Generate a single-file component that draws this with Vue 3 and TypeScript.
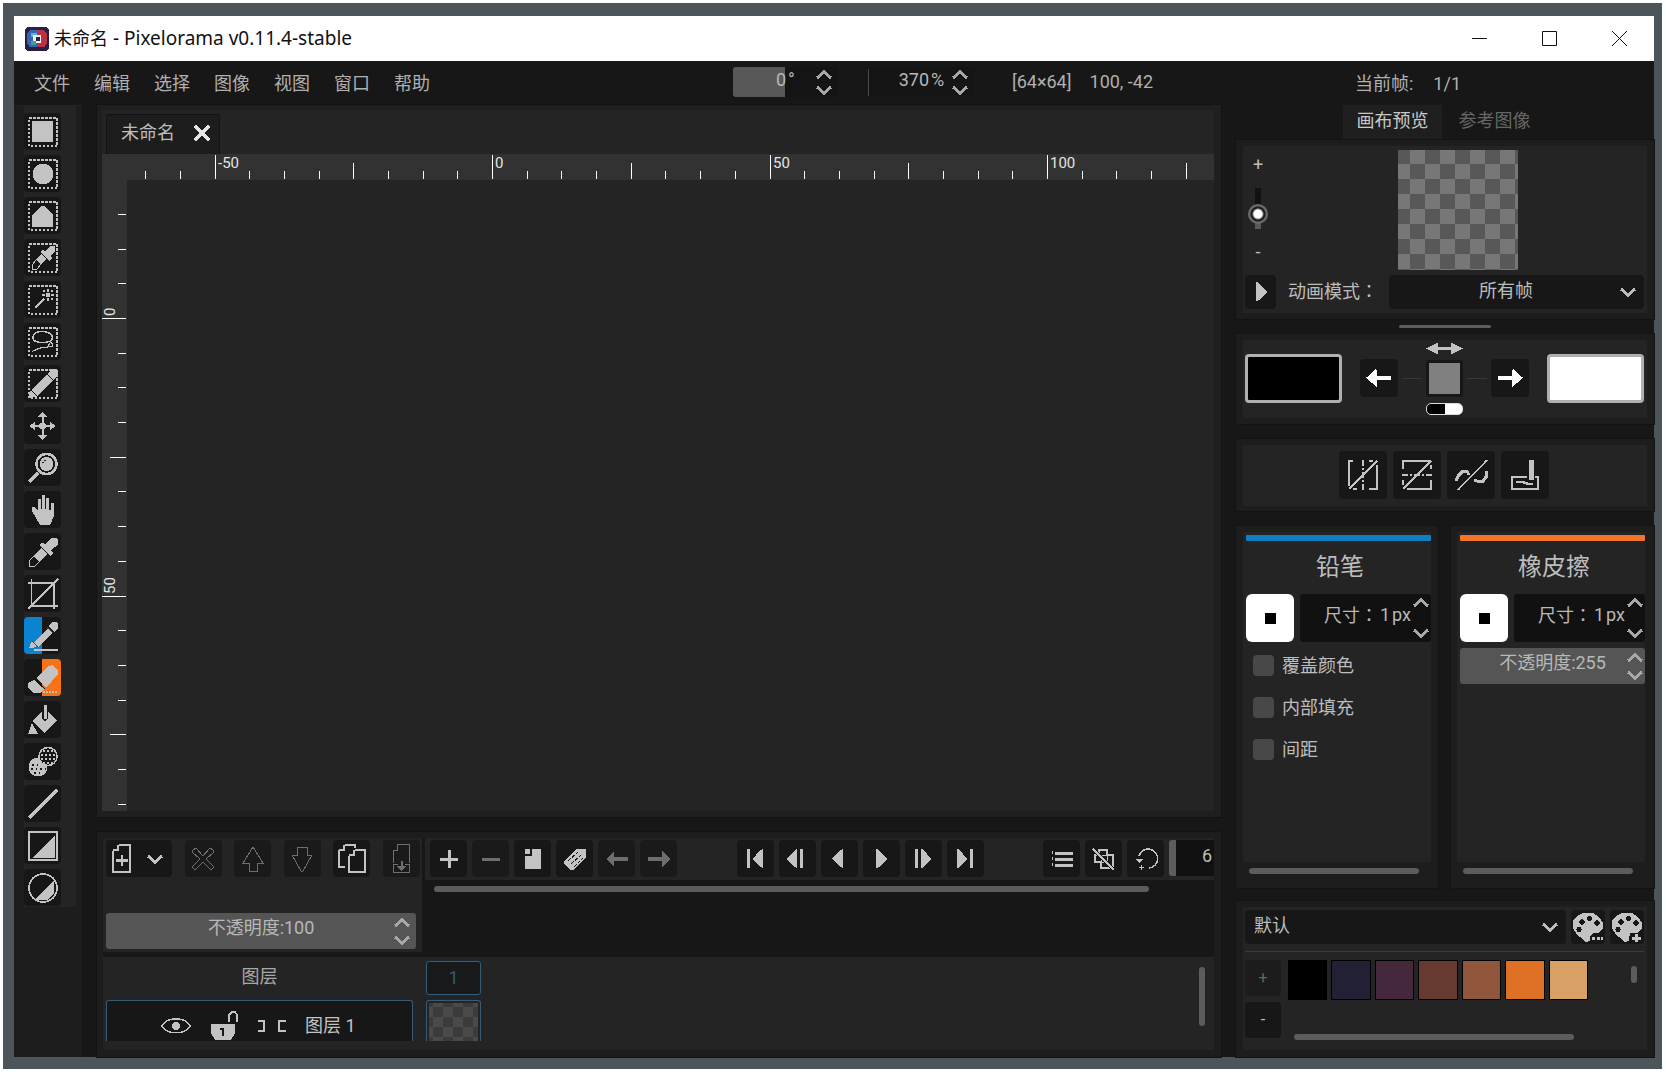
<script setup lang="ts">
import { computed, h, onMounted, onUnmounted, ref } from 'vue'

// A shape is a path plus how to paint it: 0 fills it, any other number is a stroke width.
type Shape = [d: string, stroke: number, colour?: string, dash?: string]

const disc = (x: number, y: number, r: number) => `M${x - r} ${y}a${r} ${r} 0 1 1 ${2 * r} 0a${r} ${r} 0 1 1 ${-2 * r} 0Z`
const marquee: Shape = ['M1 1H29V29H1Z', 2, 'currentColor', '2.5 1.5']

const icons: Record<string, Shape[]> = {
  rectSelect: [marquee, ['M4 4H25V25H4Z', 0]],
  ellipseSelect: [marquee, [disc(15, 15, 10.5), 0]],
  polySelect: [marquee, ['M14 5H16L25 14V26H4V14Z', 0]],
  colorSelect: [
    marquee,
    ['M17 8L22 3H27V8L22 13L24 15L21 18L12 9L15 7Z', 0],
    ['M13 11L18 16L13 21L8 17Z', 0],
    ['M8 17L4 22V26H9L13 21', 1],
  ],
  wand: [
    marquee,
    ['M7 23L16 14', 1.5],
    ['M18 8H22V12H18Z', 0],
    ['M19 4h2v3h-2zM19 13h2v3h-2zM14 9h3v2h-3zM23 9h3v2h-3zM15 5h2v2h-2zM23 5h2v2h-2zM23 13h2v2h-2z', 0],
  ],
  lasso: [
    marquee,
    ['M14 4.5C20 4.5 24.500 7 24.500 10.500S20 15.500 14 15.500S5 14 5 10.500S8 4.500 14 4.500Z', 1.5],
    ['M21 14L25 17L24 20L20 19L22 16M20 20L12 21L4 24.500', 1.2],
  ],
  paintSelect: [
    marquee,
    ['M1 29L2 22L20 4L26 10L8 28Z', 0],
    ['M20 4L24 0H28L30 2V6L26 10Z', 0],
    ['M18 4L26 12M3 21L9 27', 1, '#171717'],
  ],
  move: [
    [disc(14.5, 15, 3.5), 0],
    ['M14.5 3V27M3 15H27', 2],
    ['M14.5 1L19 6H10ZM14.5 29L19 24H10ZM1 15L7 11V19ZM28 15L22 11V19Z', 0],
  ],
  zoom: [
    [disc(18.5, 11, 10), 2.5],
    [disc(18.5, 11, 7), 0],
    ['M1 29L10 20', 3],
    ['M14 9H16M16 7H18', 1, '#171717'],
  ],
  hand: [['M4 12H7L10 16V4H13V14H14V0H17V14H18V3H21V15H23V8H26V21L22 30H12L4 16Z', 0]],
  eyedropper: [
    ['M18 7L23 1H28L30 3V8L23 13L25 16L22 19L11 8L14 6Z', 0],
    ['M13 11L19 17L11 25L6 19Z', 0],
    ['M6 19L1 24V29H7L11 25', 1],
  ],
  crop: [['M3.5 0V27H30', 1.5], ['M26 3V30', 2.5], ['M0 4H27', 2], ['M0 30L30 0', 1.5]],
  pencil: [
    ['M6 21L20 7L25 12L10 26Z', 0],
    ['M21 5L24 1H28L30 3V7L26 11Z', 0],
    ['M1 27L4 20L9 25L5 27Z', 0],
    ['M4 20L10 26M19 6L25 12', 1, '#444'],
    ['M6 29H30', 2],
  ],
  eraser: [
    ['M8 15L21 3L24 2L30 7V11L18 25Z', 0],
    ['M6 17L16 26L12 30H5L0 25V20Z', 0],
    ['M6 16L17 26', 1, '#171717'],
    ['M15 29H30', 2, 'currentColor', '2 1'],
  ],
  bucket: [
    ['M14 6L4 16L16 28L29 15L20 7V13L17 17L14 14Z', 0],
    ['M17 0V14', 3],
    ['M4 18L0 29H10Z', 0],
  ],
  shading: [
    [disc(10, 20, 9.5), 0],
    [disc(20, 9.5, 9), 0, '#171717'],
    [disc(20, 9.5, 9), 1.5],
    ['M15 4H27M13 8H28M13 12H28M15 16H25', 2, 'currentColor', '2 2'],
    ['M4 18H12M3 22H18M6 26H15', 1.5, '#171717', '1.5 3'],
  ],
  line: [['M1 29L29 1', 3]],
  rectShape: [['M1 1H29V29H1Z', 1.5], ['M27 4V27H4Z', 0]],
  ellipseShape: [[disc(15, 15, 14), 1.8], ['M26 7V20L20 27H7Z', 0]],
  newLayer: [
    ['M9 1H20V28H3V7', 2],
    ['M8 1V6H3', 1.5],
    ['M12 11V22M6 16.5H18', 2.5],
  ],
  cross: [['M5 6L8 4L15 12L22 4L25 6L26 8L18 15L26 23L23 26L15 18L7 26L4 23L12 15L4 8Z', 1]],
  up: [['M15 3L25 19H19V27H11V19H5Z', 1]],
  down: [['M10 3H20V11H25L16 27H14L5 11H10Z', 1]],
  clone: [
    ['M8 1H18V4M2 6V23H8', 1.5],
    ['M7 1V6H2', 1.5],
    ['M18 6H28V28H12V12', 1.5],
    ['M17 6V11H12', 2],
  ],
  merge: [['M11 .5H23.5V19M7 7V19M11 1V6H7', 1], ['M7 20V28.5H23.5V20H19M7 20H12', 1], ['M15.5 17V25', 2], ['M11 22H20L15.5 27Z', 0]],
  plus: [['M15 6V24M6 15H24', 3]],
  minus: [['M6 15H24', 3]],
  frameCopy: [['M14 5H23V25H7V12H14Z', 0], ['M7 5H12V10H7Z', 0]],
  tag: [['M4 17L16 5H26V14L13 26H10L4 20Z', 0], ['M8 17L18 8M11 20L21 11M14 23L23 14', 1, '#171717', '4 1']],
  arrowLeft: [['M4 15L12 7V23Z', 0], ['M11 15H26', 3.5]],
  arrowRight: [['M26 15L18 7V23Z', 0], ['M4 15H19', 3.5]],
  first: [['M7 5H10V24H7ZM13 15L20 6L23 5V24L20 23Z', 0]],
  prev: [['M4 15L13 6L15 5V24L13 23ZM18 5H21V24H18Z', 0]],
  back: [['M8 15L16 6L19 5V24L16 23Z', 0]],
  play: [['M21 15L13 23L10 24V5L13 6Z', 0]],
  next: [['M7 5H10V24H7ZM13 5L16 6L23 15L16 23L13 24Z', 0]],
  last: [['M7 5L10 6L17 15L10 23L7 24ZM20 5H23V24H20Z', 0]],
  list: [['M8 9.5H26M8 15.5H26M8 21.5H26', 3], ['M5 7V10M5 13V16M5 19V22', 1]],
  onion: [['M10 6H18V11H24V24H12V18H6V11H10Z', 1.5], ['M12 11V18H18V11Z', 1], ['M4 5L25 26', 3, '#171717'], ['M4 5L25 26', 1.5]],
  loop: [['M8 12A9.500 9.500 0 1 1 18 24', 1.5], ['M4 15H12L8 19Z', 0], ['M10.500 21V26M8 23.500H13', 1]],
  mirrorX: [
    ['M5 1H1V26M5 29H9M21 1H25M21 29H29V5', 1.5],
    ['M15 0V30', 2.5, 'currentColor', '6 2 2 2'],
    ['M1 29L29 1', 1.5],
  ],
  mirrorY: [
    ['M1 9V1H28M29 5V9M29 20V29H5M1 20V25', 1.5],
    ['M0 15H30', 2.5, 'currentColor', '6 2 2 2'],
    ['M1 29L29 1', 1.5],
  ],
  pixelPerfect: [['M0 21L2 16L7 11H11L13 15M18 20L21 21H27L30 17V11', 3], ['M2 30L31 0', 1.5]],
  dynamics: [['M17 17H2V29H28V17H25', 2.8], ['M21 0V20', 5], ['M6 22H13L18 24H23', 2.5]],
  palette: [
    ['M10 1H20L26 5L30 11V17L25 21H20L17 25V29L12 30L10 27L4 23L0 16V9L4 4Z', 0],
    [disc(9, 10, 2.6) + disc(16.5, 6.5, 2.6) + disc(24, 11, 2.6) + disc(6, 17.5, 2.6), 0, '#171717'],
  ],
  more: [['M18 24h12v5H18z', 0, '#171717'], ['M19 26.5H30', 3, 'currentColor', '3 1.5']],
  add: [['M18 21h12v9H18z', 0, '#171717'], ['M24.5 22V30M20 26.5H29', 3]],
  eye: [['M1 15C6 5.500 24 5.500 29 15C24 24 6 24 1 15Z', 1.5], [disc(15, 15, 4), 0]],
  lock: [['M2 13H26V22L22 29H6L2 22Z', 0], ['M20 11V4L23 1H26L28 4V11', 1.5], ['M11 18H14V25', 2.5, '#171717']],
  link: [['M1 10H7V20H1M29 10H22V20H29', 1.5]],
  close: [['M7 7L23 23M23 7L7 23', 3.5]],
  chevron: [['M8 12L15 18L22 12', 3]],
  chevronUp: [['M8 18L15 12L22 18', 3]],
  swap: [['M0 15L10 10V20ZM30 15L20 10V20Z', 0], ['M9 15H21', 2]],
  boldLeft: [['M1 15L12 5L13 10V25Z', 0], ['M12 15H28', 5]],
  boldRight: [['M29 15L18 5L17 10V25Z', 0], ['M2 15H18', 5]],
  appLogo: [
    ['M3 0H27L30 3V27L27 30H3L0 27V3Z', 0, '#2b1e3f'],
    ['M6 4H15V25H6L3 21V8Z', 0, '#3767b4'],
    ['M15 4H24L27 8V21L24 25H15Z', 0, '#b93344'],
    ['M7 7H15V12H7Z', 0, '#5fb0dc'],
    ['M10 10H20V20H10Z', 0, '#f4f1ee'],
    ['M14 13H19V18H14Z', 0, '#20264a'],
    ['M8 18H14V23H8Z', 0, '#3ea28a'],
  ],
}

const Ico = (props: { n: string; s?: number }) =>
  h(
    'svg',
    { class: 'ico', width: props.s ?? 30, height: props.s ?? 30, viewBox: '0 0 30 30', 'aria-hidden': 'true', 'shape-rendering': 'crispEdges' },
    props.n.split(' ').flatMap((name) =>
      icons[name].map(([d, w, c = 'currentColor', dash]) =>
        h('path', { d, fill: w ? 'none' : c, stroke: w ? c : 'none', 'stroke-width': w, 'stroke-dasharray': dash }),
      ),
    ),
  )
Ico.props = ['n', 's']

const menus = ['文件', '编辑', '选择', '图像', '视图', '窗口', '帮助']

const tools = [
  ['rectSelect', '矩形选择'], ['ellipseSelect', '椭圆选择'], ['polySelect', '多边形选择'], ['colorSelect', '按颜色选择'],
  ['wand', '魔棒'], ['lasso', '套索'], ['paintSelect', '绘制选择'], ['move', '移动'], ['zoom', '缩放'], ['hand', '平移'],
  ['eyedropper', '拾色器'], ['crop', '裁剪'], ['pencil', '铅笔'], ['eraser', '橡皮擦'], ['bucket', '油漆桶'],
  ['shading', '明暗'], ['line', '直线'], ['rectShape', '矩形'], ['ellipseShape', '椭圆'],
]

// Ruler ticks: eight steps to every 50 canvas pixels, as many as the ruler has room for.
const step = (50 * 5.55) / 8
function ticks(origin: number, length: number, start: number) {
  const out: { at: number; len: number; label: string }[] = []
  for (let i = Math.ceil((start - origin) / step); origin + i * step < length; i++) {
    const major = i % 8 === 0
    out.push({ at: Math.round(origin + i * step), len: major ? 24 : i % 4 === 0 ? 16 : 8, label: major ? String((i / 8) * 50) : '' })
  }
  return out
}
const canvasPanel = ref<HTMLElement>()
const room = ref({ w: 1100, h: 650 })
const hTicks = computed(() => ticks(390, room.value.w, 30))
const vTicks = computed(() => ticks(138, room.value.h, 20))
let observer: ResizeObserver | undefined
onMounted(() => {
  const measure = () => {
    const el = canvasPanel.value
    if (el) room.value = { w: el.clientWidth - 16, h: el.clientHeight - 84 }
  }
  measure()
  observer = new ResizeObserver(measure)
  if (canvasPanel.value) observer.observe(canvasPanel.value)
})
onUnmounted(() => observer?.disconnect())

const layerTools = [
  ['cross', '删除图层', true], ['up', '上移图层', true], ['down', '下移图层', true], ['clone', '复制图层', false], ['merge', '合并图层', true],
] as const
const frameTools = [
  ['plus', '添加帧', false], ['minus', '删除帧', true], ['frameCopy', '复制帧', false], ['tag', '标签', false], ['arrowLeft', '左移', true], ['arrowRight', '右移', true],
] as const
const playback = [['first', '第一帧'], ['prev', '上一帧'], ['back', '倒放'], ['play', '播放'], ['next', '下一帧'], ['last', '最后一帧']]
const timelineOptions = [['list', '时间轴设置'], ['onion', '洋葱皮'], ['loop', '循环']]
const symmetry = [['mirrorX', '水平镜像'], ['mirrorY', '垂直镜像'], ['pixelPerfect', '像素完美'], ['dynamics', '动态']]
const brushOptions = ['覆盖颜色', '内部填充', '间距']
const swatches = ['#000000', '#222034', '#45283c', '#663931', '#8f563b', '#df7126', '#d9a066']
const zoomLevel = ref(24)
</script>

<template>
  <div class="desktop">
    <div class="window">
      <header class="titlebar">
        <Ico n="appLogo" :s="24" />
        <span class="title">未命名<span class="latin"> - Pixelorama v0.11.4-stable</span></span>
        <button class="wbtn" aria-label="最小化"><svg width="15" height="15"><path d="M0 7.5H15" /></svg></button>
        <button class="wbtn" aria-label="最大化"><svg width="15" height="15"><path d="M.5 .5H14.5V14.5H.5Z" /></svg></button>
        <button class="wbtn" aria-label="关闭"><svg width="15" height="15"><path d="M0 0L15 15M15 0L0 15" /></svg></button>
      </header>

      <div class="menubar">
        <nav class="menus"><button v-for="m in menus" :key="m">{{ m }}</button></nav>
        <div class="status">
          <div class="spin small half">
            <input aria-label="旋转" value="0&#8202;°" />
            <span class="arrows"><button aria-label="增加"><Ico n="chevronUp" /></button><button aria-label="减少"><Ico n="chevron" /></button></span>
          </div>
          <i class="vsep"></i>
          <div class="spin small">
            <input aria-label="缩放" value="370&#8202;%" />
            <span class="arrows"><button aria-label="增加"><Ico n="chevronUp" /></button><button aria-label="减少"><Ico n="chevron" /></button></span>
          </div>
          <span class="size">[64×64]</span><span>100, -42</span>
        </div>
        <div class="frame-info"><span>当前帧:</span><span>1/1</span></div>
      </div>

      <div class="body">
        <aside class="toolbar">
          <div class="tools">
            <button v-for="[n, label] in tools" :key="n" class="btn" :class="n" :aria-label="label"><Ico :n="n" /></button>
          </div>
        </aside>

        <main class="main">
          <section ref="canvasPanel" class="panel canvas-panel">
            <div class="tabs">
              <div class="tab"><span>未命名</span><button aria-label="关闭标签"><Ico n="close" :s="28" /></button></div>
            </div>
            <svg class="ruler-h" shape-rendering="crispEdges">
              <g v-for="t in hTicks" :key="t.at">
                <path :d="`M${t.at + .5} ${25 - t.len}V25`" />
                <text v-if="t.label" :x="t.at + 3" y="14">{{ t.label }}</text>
              </g>
            </svg>
            <div class="viewport">
              <svg class="ruler-v" shape-rendering="crispEdges">
                <g v-for="t in vTicks" :key="t.at" :transform="`translate(0 ${t.at})`">
                  <path :d="`M${24 - t.len} .5H24`" />
                  <text v-if="t.label" transform="translate(13 -2) rotate(-90)">{{ t.label }}</text>
                </g>
              </svg>
            </div>
          </section>

          <section class="panel timeline">
            <div class="tl-top">
              <div class="layer-head">
                <div class="row spread">
                  <button class="btn wide" aria-label="添加图层"><Ico n="newLayer" /><Ico n="chevron" /></button>
                  <button v-for="[n, l, off] in layerTools" :key="n" class="btn" :class="{ off }" :aria-label="l"><Ico :n="n" /></button>
                </div>
                <div class="spin bar full">
                  <input aria-label="图层不透明度" value="不透明度:100" />
                  <span class="arrows"><button aria-label="增加"><Ico n="chevronUp" /></button><button aria-label="减少"><Ico n="chevron" /></button></span>
                </div>
              </div>
              <div class="frame-head">
                <div class="frame-bar">
                  <div class="row"><button v-for="[n, l, off] in frameTools" :key="n" class="btn" :class="{ off }" :aria-label="l"><Ico :n="n" /></button></div>
                  <div class="row"><button v-for="[n, l] in playback" :key="n" class="btn" :aria-label="l"><Ico :n="n" /></button></div>
                  <div class="row">
                    <button v-for="[n, l] in timelineOptions" :key="n" class="btn" :aria-label="l"><Ico :n="n" /></button>
                    <input class="fps" aria-label="每秒帧数" value="6" />
                  </div>
                </div>
                <div class="scroll-h"></div>
              </div>
            </div>
            <div class="layers">
              <div class="grid">
                <div class="heading">图层</div>
                <button class="frame-no">1</button>
                <div class="layer-row">
                  <button aria-label="可见"><Ico n="eye" /></button>
                  <button aria-label="锁定"><Ico n="lock" /></button>
                  <button aria-label="链接"><Ico n="link" /></button>
                  <span>图层 1</span>
                </div>
                <button class="cel" aria-label="画格"><i></i></button>
              </div>
              <div class="scroll-v"></div>
            </div>
          </section>
        </main>

        <aside class="side">
          <div class="side-tabs"><button class="on">画布预览</button><button>参考图像</button></div>
          <section class="panel preview">
            <div class="inner">
              <div class="preview-row">
                <div class="zoomer">
                  <span>+</span>
                  <input v-model="zoomLevel" type="range" min="0" max="100" aria-label="预览缩放" />
                  <span>-</span>
                </div>
                <div class="checker"></div>
              </div>
              <div class="anim-row">
                <button class="btn play" aria-label="播放"><Ico n="play" /></button>
                <label for="anim">动画模式<span class="colon">：</span></label>
                <div class="select"><select id="anim" class="center"><option>所有帧</option></select><Ico n="chevron" /></div>
              </div>
            </div>
          </section>
          <div class="grip"></div>

          <section class="panel colours">
            <div class="inner">
              <button class="colour black" aria-label="左键颜色"></button>
              <button class="btn" aria-label="左"><Ico n="boldLeft" :s="28" /></button>
              <i class="dash"></i>
              <div class="mid">
                <button class="bare" aria-label="交换"><Ico n="swap" :s="37" /></button>
                <button class="average" aria-label="平均颜色"></button>
                <button class="reset" aria-label="重置颜色"></button>
              </div>
              <i class="dash"></i>
              <button class="btn" aria-label="右"><Ico n="boldRight" :s="28" /></button>
              <button class="colour white" aria-label="右键颜色"></button>
            </div>
          </section>

          <section class="panel symmetry">
            <div class="inner"><button v-for="[n, l] in symmetry" :key="n" class="btn big" :aria-label="l"><Ico :n="n" /></button></div>
          </section>

          <div class="options">
            <section class="panel option">
              <div class="inner">
                <div class="accent blue"></div>
                <h2>铅笔</h2>
                <div class="brush-row">
                  <button class="brush" aria-label="笔刷"></button>
                  <div class="spin size-spin">
                    <label for="s1">尺寸<span class="colon">：</span></label><input id="s1" value="1&#8202;px" />
                    <span class="arrows"><button aria-label="增加"><Ico n="chevronUp" /></button><button aria-label="减少"><Ico n="chevron" /></button></span>
                  </div>
                </div>
                <label v-for="o in brushOptions" :key="o" class="check"><input type="checkbox" /><span>{{ o }}</span></label>
              </div>
              <div class="scroll-h"></div>
            </section>
            <section class="panel option">
              <div class="inner">
                <div class="accent orange"></div>
                <h2>橡皮擦</h2>
                <div class="brush-row">
                  <button class="brush" aria-label="笔刷"></button>
                  <div class="spin size-spin">
                    <label for="s2">尺寸<span class="colon">：</span></label><input id="s2" value="1&#8202;px" />
                    <span class="arrows"><button aria-label="增加"><Ico n="chevronUp" /></button><button aria-label="减少"><Ico n="chevron" /></button></span>
                  </div>
                </div>
                <div class="spin bar full">
                  <input aria-label="橡皮擦不透明度" value="不透明度:255" />
                  <span class="arrows"><button aria-label="增加"><Ico n="chevronUp" /></button><button aria-label="减少"><Ico n="chevron" /></button></span>
                </div>
              </div>
              <div class="scroll-h"></div>
            </section>
          </div>

          <section class="panel palettes">
            <div class="inner">
              <div class="pal-row">
                <div class="select"><select aria-label="调色板"><option>默认</option></select><Ico n="chevron" /></div>
                <button class="btn pal" aria-label="编辑调色板"><Ico n="palette more" /></button>
                <button class="btn pal" aria-label="添加调色板"><Ico n="palette add" /></button>
              </div>
              <div class="pal-body">
                <div class="pal-side"><button class="btn text dim">+</button><button class="btn text">-</button></div>
                <div class="pal-main">
                  <div class="swatches"><button v-for="c in swatches" :key="c" :style="{ background: c }" :aria-label="c"></button></div>
                  <div class="scroll-h"></div>
                </div>
                <div class="scroll-v"></div>
              </div>
            </div>
          </section>
        </aside>
      </div>
    </div>
  </div>
</template>

<style>
body { background: #fdfefe; }
</style>

<style scoped>
* { box-sizing: border-box; }
.desktop {
  display: flex;
  min-height: 100vh;
  padding: 13px 8px 12px 11px;
  border: solid #fdfefe;
  border-width: 3px 4px 3px 3px;
  background: #4b555a;
  color: #bdbdbd;
  font: 18px/24px Roboto, "Noto Sans CJK SC", sans-serif;
}
.window { flex: 1; min-width: 0; display: flex; flex-direction: column; background: #171717; }
button, input, select { margin: 0; padding: 0; border: 0; background: none; color: inherit; font: inherit; }
.ico { display: block; flex: none; overflow: visible; }
button { display: block; }

.titlebar { display: flex; align-items: center; height: 45px; padding-left: 11px; background: #fff; color: #111; }
.title { flex: 1; margin-left: 5px; padding-bottom: 2px; font-family: "Noto Sans", "Noto Sans CJK SC", sans-serif; }
.latin { font-size: 19px; }
.wbtn { width: 70px; height: 45px; display: flex; align-items: center; justify-content: center; }
.wbtn path { fill: none; stroke: #111; stroke-width: 1; }

.menubar { display: flex; align-items: center; height: 44px; padding-left: 20px; color: #b0b0b0; }
.menus { display: flex; gap: 24px; padding-top: 2px; }
.status { display: flex; align-items: center; padding-bottom: 2px; }
.menubar::before { content: ""; order: 1; flex: 3; }
.menubar::after { content: ""; order: 3; flex: 2; }
.status { order: 2; }
.frame-info { order: 4; display: flex; gap: 20px; width: 299px; padding-top: 2px; }
.vsep { width: 1px; height: 27px; margin-left: 30px; background: #4a4a4a; }
.size { margin: 0 18px 0 38px; }

.spin { position: relative; display: flex; background: #111; border-radius: 3px; color: #b8b8b8; }
.spin input { width: 100%; min-width: 0; text-align: center; outline: 0; }
.arrows { position: absolute; right: 2px; top: 0; bottom: 0; display: flex; flex-direction: column; justify-content: space-between; color: #a8a8a8; }
.arrows button { height: 15px; display: flex; align-items: center; overflow: hidden; width: 24px; justify-content: center; }
.spin.small { width: 105px; height: 30px; background: #151515; }
.spin.small.half { background: linear-gradient(90deg, #585858 50%, #141414 50%); }
.spin.small input { padding-bottom: 5px; }
.spin.bar { height: 36px; background: #555; }
.spin.bar input { padding-bottom: 6px; }
.spin.bar .arrows { padding: 2px 0; }

.body { flex: 1; display: flex; gap: 15px; min-height: 0; }
.toolbar { width: 68px; padding: 0 6px 0 10px; background: #1d1d1d; border-top: 1px solid #222; }
.tools { display: flex; flex-direction: column; gap: 5px; padding: 7px 0 1px; background: #242424; }
.btn { display: flex; align-items: center; justify-content: center; width: 37px; height: 37px; flex: none; border-radius: 4px; background: #171717; color: #c3c3c3; }
.btn.pencil { background: linear-gradient(90deg, #0a84d0 50%, #171717 50%); }
.btn.eraser { background: linear-gradient(90deg, #171717 50%, #f97316 50%); }
.btn.off { background: #1a1a1a; color: #6e6e6e; }

.main { flex: 1; min-width: 0; display: flex; flex-direction: column; gap: 15px; }
.panel { background: #1d1d1d; box-shadow: 0 0 0 1px #131313; }
.inner { background: #242424; }
.canvas-panel { flex: 1; display: flex; flex-direction: column; padding: 5px 7px 6px 5px; background: #1f1f1f; }
.tabs { height: 44px; padding: 4px 4px 0; background: #242424; }
.tab { display: flex; align-items: center; justify-content: space-between; width: 114px; height: 40px; padding: 0 3px 3px 14px; border: 1px solid #141414; border-bottom: 0; background: #1d1d1d; }
.tab button { color: #e6e6e6; }
.ruler-h { display: block; width: 100%; height: 26px; background: #323232; }
.viewport { flex: 1; display: flex; background: #242424; }
.ruler-v { width: 25px; height: 100%; background: #323232; }
.ruler-h path, .ruler-v path { stroke: #fff; stroke-width: 1; }
.ruler-h text, .ruler-v text { fill: #e4e4e4; font-size: 15px; }

.timeline { padding: 6px 7px 7px 6px; }
.tl-top { display: flex; gap: 3px; height: 119px; background: #171717; }
.layer-head { flex: 0 0 319px; height: 114px; padding: 2px 5px 3px 3px; display: flex; flex-direction: column; justify-content: space-between; background: #242424; }
.row { display: flex; gap: 5px; }
.spread { justify-content: space-between; gap: 0; margin-right: -3px; }
.btn.wide { width: 66px; justify-content: space-between; padding: 0 2px 0 4px; }
.layer-head .bar { width: 310px; }
.frame-head { flex: 1; min-width: 0; }
.frame-bar { display: flex; justify-content: space-between; padding: 2px 0 3px 5px; background: #242424; }
.fps { width: 45px; height: 36px; border-left: 7px solid #5c5c5c; border-radius: 3px 0 0 3px; background: #111; text-align: right; padding: 0 2px 6px 0; }
.scroll-h { height: 6px; border-radius: 3px; background: #5c5c5c; }
.frame-head .scroll-h { margin: 6px 65px 0 9px; }
.layers { display: flex; justify-content: space-between; padding: 4px 9px 9px 3px; background: #242424; }
.grid { display: grid; grid-template: 34px 41px / 307px 55px; gap: 5px 13px; }
.heading { padding-top: 4px; text-align: center; color: #a8a8a8; }
.frame-no { border: 1px solid #355b75; border-radius: 3px; background: #17191b; color: #355b75; box-shadow: 0 0 0 1px #1a2a35; }
.layer-row { display: flex; align-items: center; padding: 10px 0 0 54px; overflow: hidden; border: solid #355b75; border-width: 1px 1px 0; border-radius: 3px 3px 0 0; background: #171717; color: #c3c3c3; }
.layer-row button { margin-right: 18px; }
.cel { display: flex; padding: 2px 2px 0; border: solid #355b75; border-width: 1px 1px 0; border-radius: 3px 3px 0 0; }
.cel i { flex: 1; height: 100%; background: conic-gradient(#4a4a4a 25%, #3b3b3b 0 50%, #4a4a4a 0 75%, #3b3b3b 0) -6px -6px / 20px 20px; }
.layers .scroll-v { height: 59px; margin-top: 6px; }
.scroll-v { width: 6px; border-radius: 3px; background: #5c5c5c; }

.side { flex: 0 0 418px; min-width: 0; display: flex; flex-direction: column; }
.side-tabs { display: flex; height: 35px; padding-left: 107px; }
.side-tabs button { width: 99px; height: 35px; padding-bottom: 4px; color: #666; }
.side-tabs button + button { width: 105px; }
.side-tabs .on { background: #1f1f1f; color: #c8c8c8; }
.preview { height: 179px; padding: 6px 7px; }
.preview .inner { padding: 4px 3px 4px 2px; height: 167px; }
.preview-row { display: flex; }
.zoomer { display: flex; flex-direction: column; align-items: center; justify-content: space-between; width: 26px; height: 120px; padding: 3px 0 6px; }
.zoomer input { width: 24px; height: 41px; writing-mode: vertical-lr; direction: rtl; appearance: none; background: linear-gradient(#121212 65%, #5a5a5a 65%) center / 6px 100% no-repeat; }
.zoomer input::-webkit-slider-thumb { appearance: none; width: 20px; height: 20px; border-radius: 50%; background: radial-gradient(#fff 4px, #1c1c1c 6px, #1c1c1c 7px, #6a6a6a 8px); }
.checker { width: 120px; height: 120px; margin: 0 auto; background: conic-gradient(#777 25%, #585858 0 50%, #777 0 75%, #585858 0) -3px -1px / 30px 30px; }
.anim-row { display: flex; align-items: center; margin-top: 5px; }
.btn.play { width: 31px; height: 34px; }
.anim-row label { margin: 0 auto 2px 12px; white-space: nowrap; }
.colon { font-family: "Noto Sans CJK TC", sans-serif; }
.select { position: relative; display: flex; flex: 0 0 255px; height: 34px; border-radius: 4px; background: #171717; }
.select select { width: 100%; appearance: none; padding: 0 30px 2px 9px; }
.select .center { text-align: center; text-align-last: center; }
.select .ico { position: absolute; right: 1px; top: 2px; pointer-events: none; }
.grip { flex: none; width: 92px; height: 3px; margin: 6px auto; border-radius: 2px; background: #5c5c5c; }

.colours { padding: 6px 7px; margin-bottom: 15px; }
.colours .inner { display: flex; align-items: center; justify-content: space-between; height: 78px; padding: 0 3px 2px 2px; }
.colour { width: 97px; height: 49px; border: 3px solid #b0b0b0; border-radius: 4px; }
.black { background: #000; }
.white { background: #fff; }
.colours .btn { width: 38px; height: 38px; color: #fff; }
.dash { width: 20px; height: 1px; margin: 0 -14px; background: #383838; }
.mid { display: flex; flex-direction: column; align-items: center; }
.bare { height: 14px; display: flex; align-items: center; overflow: hidden; color: #c3c3c3; }
.average { width: 37px; height: 37px; margin: 4px 0 6px; border: 3px solid #171717; border-radius: 3px; background: #808080; }
.reset { width: 37px; height: 12px; border: 1px solid #ddd; border-radius: 5px; background: linear-gradient(90deg, #000 50%, #fff 50%); }
.symmetry { padding: 6px 7px 5px; margin-bottom: 15px; }
.symmetry .inner { display: flex; justify-content: center; gap: 6px; padding: 6px 3px 7px 0; }
.btn.big { width: 48px; height: 48px; }

.options { flex: 1; display: flex; gap: 13px; margin-bottom: 13px; }
.option { flex: 1; min-width: 0; display: flex; flex-direction: column; padding: 6px 7px 14px 7px; }
.option + .option { padding-left: 6px; padding-right: 9px; }
.option .inner { flex: 1; padding: 3px 0 0 3px; }
.option .scroll-h { margin: 6px 12px 0 6px; }
.accent { height: 6px; border-radius: 1px; }
.blue { background: #0f7fc2; }
.orange { background: #f0742a; }
h2 { margin: 9px 0 10px 3px; font-size: 24px; line-height: 34px; font-weight: 400; text-align: center; }
.brush-row { display: flex; gap: 6px; margin-bottom: 6px; }
.brush { flex: none; width: 48px; height: 48px; border-radius: 6px; background: linear-gradient(#000, #000) center / 11px 11px no-repeat #fff; }
.size-spin { flex: 1; min-width: 0; align-items: center; height: 48px; padding: 0 18px 6px 24px; }
.size-spin label { flex: none; }
.size-spin input { text-align: left; padding-left: 2px; }
.size-spin .arrows { right: -2px; padding: 1px 0 2px; }
.option .bar .arrows { right: -2px; }
.check { display: flex; align-items: center; gap: 8px; height: 36px; margin-bottom: 6px; padding: 0 0 1px 7px; }
.check input { appearance: none; width: 21px; height: 21px; border-radius: 4px; background: #484848; }

.palettes { padding: 6px 7px 7px; }
.palettes .inner { padding: 3px 3px 3px 2px; }
.pal-row { display: flex; gap: 5px; padding-bottom: 7px; border-bottom: 1px solid #3a3a3a; }
.pal-row .select { flex: 1; }
.pal { width: 34px; height: 34px; }
.pal-body { display: flex; height: 95px; padding-top: 8px; }
.pal-side { display: flex; flex-direction: column; gap: 6px; }
.btn.text { width: 36px; height: 36px; font-size: 16px; }
.dim { background: #1c1c1c; color: #666; }
.pal-main { width: 300px; margin-left: 7px; }
.swatches { display: grid; grid-template-columns: repeat(7, 1fr); gap: 4px; }
.swatches button { height: 40px; border: 1px solid #000; }
.pal-main .scroll-h { margin: 34px 14px 0 6px; }
.pal-body .scroll-v { height: 17px; margin: 6px 7px 0 auto; }
</style>
